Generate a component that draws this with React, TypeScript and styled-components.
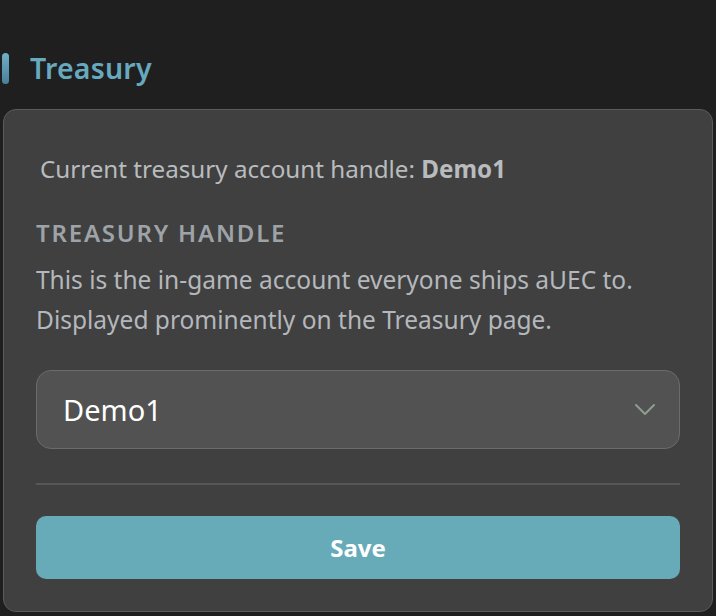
import React from 'react';
import styled, { createGlobalStyle } from 'styled-components';

const GlobalStyle = createGlobalStyle`
    html, body {
        margin: 0;
        padding: 0;
        background: #1f1f1f;
    }
    body {
        font-family: 'Noto Sans', 'Open Sans', sans-serif;
    }
`;

const Page = styled.div`
    box-sizing: border-box;
    height: 616px;
    padding: 52px 3px 4px 3px;
    display: flex;
    flex-direction: column;
`;

const SectionHeader = styled.div`
    align-items: center;
    display: flex;
    gap: 21px;
    height: 32px;
    margin: 0 0 25px -1px;
`;

const AccentBar = styled.span`
    background: linear-gradient(180deg, #6fb0c6 0%, #4b7f9c 100%);
    border-radius: 4px;
    height: 31px;
    width: 7px;
`;

const SectionTitle = styled.h2`
    color: #67a9bf;
    font-size: 28.5px;
    font-weight: 600;
    letter-spacing: 0.2px;
    margin: 0;
`;

const Panel = styled.div`
    background: #404040;
    border: 1px solid #5b5b5b;
    border-radius: 13px;
    box-sizing: border-box;
    display: flex;
    flex: 1;
    flex-direction: column;
    padding: 0 32px;
`;

const CurrentHandle = styled.p`
    color: #b9bcbe;
    font-size: 24.2px;
    line-height: 28px;
    margin: 45px 0 0 4px;

    strong {
        color: #b9bcbe;
        font-weight: 700;
    }
`;

const FieldLabel = styled.div`
    color: #9ea3a8;
    font-size: 24px;
    font-weight: 600;
    letter-spacing: 1.8px;
    line-height: 28px;
    margin-top: 36px;
    text-transform: uppercase;
`;

const FieldHelp = styled.p`
    color: #b4b8bc;
    font-size: 24.5px;
    line-height: 40px;
    margin: 13px 0 0;
`;

const SelectBox = styled.div`
    align-items: center;
    background: #525252;
    border: 1.5px solid #6b6b6b;
    border-radius: 15px;
    box-sizing: border-box;
    color: #ffffff;
    display: flex;
    font-size: 29px;
    height: 79px;
    justify-content: space-between;
    margin-top: 30px;
    padding: 0 22px 0 26px;
`;

const Chevron = styled.svg`
    height: 14px;
    width: 24px;
`;

const Divider = styled.hr`
    border: none;
    border-top: 2px solid #575757;
    margin: 34px 0 0;
`;

const SaveButton = styled.button`
    background: #68abb8;
    border: none;
    border-radius: 10px;
    color: #ffffff;
    font-family: inherit;
    font-size: 24px;
    font-weight: 700;
    height: 63px;
    margin-top: 31px;
    width: 100%;
`;

const App: React.FC = () => {
    return (
        <>
            <GlobalStyle />
            <Page>
                <SectionHeader>
                    <AccentBar />
                    <SectionTitle>Treasury</SectionTitle>
                </SectionHeader>
                <Panel>
                    <CurrentHandle>
                        Current treasury account handle: <strong>Demo1</strong>
                    </CurrentHandle>
                    <FieldLabel>Treasury handle</FieldLabel>
                    <FieldHelp>
                        This is the in-game account everyone ships aUEC to.
                        <br />
                        Displayed prominently on the Treasury page.
                    </FieldHelp>
                    <SelectBox>
                        <span>Demo1</span>
                        <Chevron viewBox="0 0 24 14" fill="none">
                            <path d="M3 2 L12 11 L21 2" stroke="#8d9d8e" strokeWidth="2" strokeLinecap="round" strokeLinejoin="round" />
                        </Chevron>
                    </SelectBox>
                    <Divider />
                    <SaveButton>Save</SaveButton>
                </Panel>
            </Page>
        </>
    );
};

export default App;
